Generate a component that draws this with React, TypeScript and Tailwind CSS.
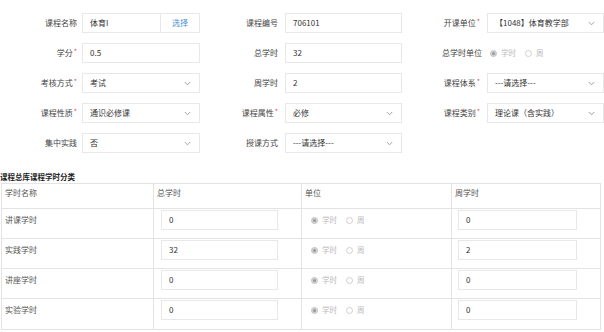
import React from 'react';

function Req() {
  return <span className="text-[#e74c3c] text-[7px] relative -top-[2px] ml-[1px]">*</span>;
}

function Chevron() {
  return (
    <svg width="7" height="5" viewBox="0 0 7 5" className="shrink-0">
      <polyline points="0.8,1 3.5,3.8 6.2,1" fill="none" stroke="#999" strokeWidth="0.9" />
    </svg>
  );
}

function Radio({ checked }: { checked?: boolean }) {
  return checked ? (
    <span className="w-[7px] h-[7px] rounded-full bg-[#d4d4d4] border border-[#c4c4c4] flex items-center justify-center shrink-0">
      <span className="w-[3px] h-[3px] rounded-full bg-[#999]" />
    </span>
  ) : (
    <span className="block w-[7px] h-[7px] rounded-full bg-white border border-[#d0d0d0] shrink-0" />
  );
}

function UnitRadios() {
  return (
    <div className="flex items-center text-[7.5px] text-[#bbb]">
      <Radio checked />
      <span className="ml-[4px]">学时</span>
      <span className="ml-[9px]">
        <Radio />
      </span>
      <span className="ml-[4px]">周</span>
    </div>
  );
}

function Label({ text, req, pr = 'pr-[5px]' }: { text: string; req?: boolean; pr?: string }) {
  return (
    <div className={`h-[20px] flex items-center justify-end text-[8px] text-[#444] ${pr}`}>
      {text}
      {req && <Req />}
    </div>
  );
}

function TextBox({ value }: { value: string }) {
  return (
    <div className="h-[20px] border border-[#e8e8e8] flex items-center px-[7px] text-[8px] text-[#333]">
      {value}
    </div>
  );
}

function SelectBox({ value }: { value: string }) {
  return (
    <div className="h-[20px] border border-[#e8e8e8] flex items-center justify-between pl-[7px] pr-[8px] text-[8px] text-[#333]">
      <span>{value}</span>
      <Chevron />
    </div>
  );
}

const hourRows = [
  { name: '讲课学时', total: '0', week: '0' },
  { name: '实践学时', total: '32', week: '2' },
  { name: '讲座学时', total: '0', week: '0' },
  { name: '实验学时', total: '0', week: '0' },
];

export default function App() {
  return (
    <div className="w-[604px] h-[332px] bg-white overflow-hidden font-['Noto_Sans_CJK_SC','Noto_Sans',sans-serif]">
      <div className="grid grid-cols-[82px_118px_85px_117px_85px_117px] gap-y-[10px] pt-[13px]">
        <Label text="课程名称" />
        <div className="h-[20px] border border-[#e8e8e8] flex text-[8px]">
          <div className="flex-1 flex items-center px-[7px] text-[#333]">体育I</div>
          <div className="w-[39px] border-l border-[#e8e8e8] flex items-center justify-center text-[#4a8fd8]">选择</div>
        </div>
        <Label text="课程编号" pr="pr-[7px]" />
        <TextBox value="706101" />
        <Label text="开课单位" req pr="pr-[7px]" />
        <SelectBox value="【1048】体育教学部" />

        <Label text="学分" req />
        <TextBox value="0.5" />
        <Label text="总学时" pr="pr-[7px]" />
        <TextBox value="32" />
        <Label text="总学时单位" pr="pr-[5px]" />
        <div className="h-[20px] flex items-center pl-[3px]">
          <UnitRadios />
        </div>

        <Label text="考核方式" req />
        <SelectBox value="考试" />
        <Label text="周学时" pr="pr-[7px]" />
        <TextBox value="2" />
        <Label text="课程体系" req pr="pr-[7px]" />
        <SelectBox value="---请选择---" />

        <Label text="课程性质" req />
        <SelectBox value="通识必修课" />
        <Label text="课程属性" req pr="pr-[7px]" />
        <SelectBox value="必修" />
        <Label text="课程类别" req pr="pr-[7px]" />
        <SelectBox value="理论课（含实践）" />

        <Label text="集中实践" />
        <SelectBox value="否" />
        <Label text="授课方式" pr="pr-[7px]" />
        <SelectBox value="---请选择---" />
      </div>

      <div className="mt-[18px] h-[12px] flex items-center text-[7.5px] font-bold text-[#222]">
        课程总库课程学时分类
      </div>

      <div className="ml-[1px] w-[600px] border border-[#e3e3e3] text-[8px] text-[#555]">
        <div className="grid grid-cols-[151px_148px_150px_149px] h-[25px] border-b border-[#e3e3e3]">
          <div className="pl-[3px] pt-[3px]">学时名称</div>
          <div className="pl-[3px] pt-[3px] border-l border-[#e3e3e3]">总学时</div>
          <div className="pl-[3px] pt-[3px] border-l border-[#e3e3e3]">单位</div>
          <div className="pl-[3px] pt-[3px] border-l border-[#e3e3e3]">周学时</div>
        </div>
        {hourRows.map((r, i) => (
          <div
            key={r.name}
            className={`grid grid-cols-[151px_148px_150px_149px] h-[30px] ${i < hourRows.length - 1 ? 'border-b border-[#e3e3e3]' : ''}`}
          >
            <div className="pl-[3px] pt-[1px] h-[21px] flex items-center">{r.name}</div>
            <div className="border-l border-[#e3e3e3] pl-[7px] pt-[1px]">
              <div className="w-[117px] h-[20px] border border-[#e8e8e8] flex items-center px-[7px] text-[#333]">{r.total}</div>
            </div>
            <div className="border-l border-[#e3e3e3] pl-[9px] pt-[1px] h-full">
              <div className="h-[20px] flex items-center">
                <UnitRadios />
              </div>
            </div>
            <div className="border-l border-[#e3e3e3] pl-[6px] pt-[1px]">
              <div className="w-[119px] h-[20px] border border-[#e8e8e8] flex items-center px-[7px] text-[#333]">{r.week}</div>
            </div>
          </div>
        ))}
      </div>
    </div>
  );
}
